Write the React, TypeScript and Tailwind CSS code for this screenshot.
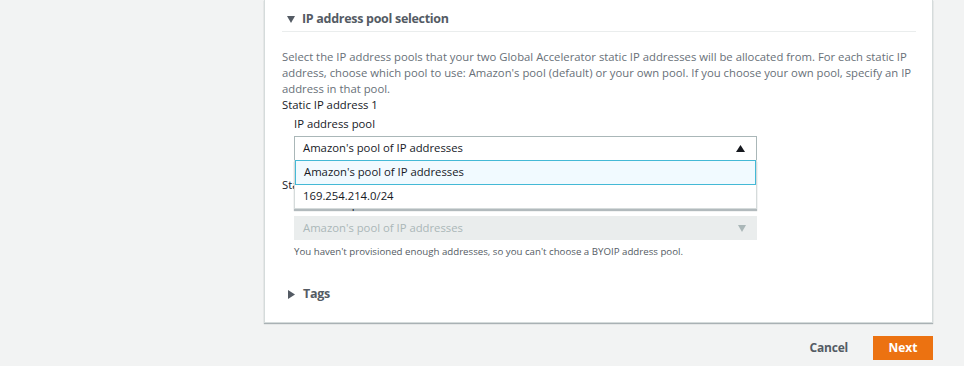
import React from 'react';

const FONT = { fontFamily: '"Open Sans", "Noto Sans", Arial, sans-serif' };

function Caret({ dir, color }: { dir: 'up' | 'down' | 'right'; color: string }) {
  const pts =
    dir === 'up' ? '0,7 4.5,0 9,7' : dir === 'down' ? '0,0 8,0 4,7' : '0,0 7,4.5 0,9';
  const w = dir === 'right' ? 7 : dir === 'up' ? 9 : 8;
  const h = dir === 'right' ? 9 : 7;
  return (
    <svg width={w} height={h} viewBox={`0 0 ${w} ${h}`}>
      <polygon points={pts} fill={color} />
    </svg>
  );
}

export default function App() {
  return (
    <div className="w-full h-[366px] bg-[#f2f3f3] flex overflow-hidden" style={FONT}>
      <div className="w-[264px] shrink-0" />
      <div className="w-[669px] shrink-0 flex flex-col">
        {/* Card */}
        <div className="bg-white border-l border-r border-b border-[#d5dbdb] shadow-[0_1px_1px_rgba(0,28,36,0.3)] pl-[17px] pr-[16px] h-[323px] flex flex-col">
          <div className="mt-[7px] h-[25px] flex items-center border-b border-[#eaeded]">
            <span className="ml-[5px] mr-[7px] flex"><Caret dir="down" color="#545b64" /></span>
            <span className="text-[12.5px] font-bold tracking-[-0.3px] text-[#545b64]">IP address pool selection</span>
          </div>

          <p className="mt-[17px] text-[11.3px] leading-[16px] text-[#687078]">
            Select the IP address pools that your two Global Accelerator static IP addresses will be allocated from. For each static IP address, choose which pool to use: Amazon's pool (default) or your own pool. If you choose your own pool, specify an IP address in that pool.
          </p>

          <div className="text-[11.3px] leading-[16px] text-[#16191f]">Static IP address 1</div>
          <div className="pl-[12px] w-[475px]">
            <div className="mt-[3px] text-[11.3px] leading-[16px] text-[#16191f]">IP address pool</div>
            <div className="relative mt-[4px]">
              <div className="h-[25px] border border-[#aab7b8] flex items-center justify-between pl-[8px] pr-[11px] text-[11.3px] text-[#16191f]">
                <span>Amazon's pool of IP addresses</span>
                <Caret dir="up" color="#16191f" />
              </div>
              {/* open dropdown list */}
              <div className="absolute left-0 right-0 top-[24px] z-10 bg-white border-l border-r border-b border-[#d5dbdb] shadow-[0_2px_1px_rgba(0,28,36,0.3)]">
                <div className="h-[25px] border border-[#44b9d6] bg-[#f1faff] flex items-center pl-[8px] text-[11.3px] text-[#16191f]">
                  Amazon's pool of IP addresses
                </div>
                <div className="h-[23px] flex items-center pl-[8px] text-[11.3px] text-[#16191f]">169.254.214.0/24</div>
              </div>
            </div>
          </div>

          <div className="mt-[16px] text-[11.3px] leading-[16px] text-[#16191f]">Static IP address 2</div>
          <div className="pl-[12px] w-[475px]">
            <div className="mt-[3px] text-[11.3px] leading-[16px] text-[#16191f]">IP address pool</div>
            <div className="mt-[4px] h-[24px] bg-[#eaeded] flex items-center justify-between pl-[9px] pr-[11px] text-[11.3px] text-[#aab7b8]">
              <span>Amazon's pool of IP addresses</span>
              <Caret dir="down" color="#aab7b8" />
            </div>
            <div className="mt-[5px] text-[9.7px] leading-[14px] text-[#545b64]">
              You haven't provisioned enough addresses, so you can't choose a BYOIP address pool.
            </div>
          </div>

          <div className="mt-[25px] h-[20px] flex items-center">
            <span className="ml-[6px] mr-[8px] flex"><Caret dir="right" color="#545b64" /></span>
            <span className="text-[12.5px] font-bold tracking-[-0.3px] text-[#545b64]">Tags</span>
          </div>
        </div>

        {/* Actions */}
        <div className="mt-[13px] flex items-center justify-end">
          <button className="text-[12px] font-bold tracking-[-0.2px] text-[#545b64] mr-[25px]">Cancel</button>
          <button className="w-[60px] h-[24px] bg-[#ec7211] text-white text-[12px] font-bold">Next</button>
        </div>
      </div>
    </div>
  );
}
